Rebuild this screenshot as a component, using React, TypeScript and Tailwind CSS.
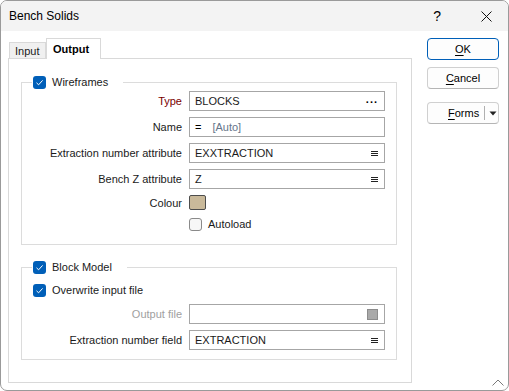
import React from "react";

const font = { fontFamily: '"Liberation Sans", Arial, sans-serif' };

function Check({ on }: { on: boolean }) {
  if (!on) {
    return <span className="block w-[13px] h-[13px] rounded-[3px] border border-[#8a8a8a] bg-[#f7f7f7]" />;
  }
  return (
    <span className="flex w-[13px] h-[13px] rounded-[3px] bg-[#005fb8] items-center justify-center">
      <svg width="9" height="9" viewBox="0 0 9 9" fill="none">
        <path d="M1.5 4.8 L3.6 6.8 L7.6 2.4" stroke="white" strokeWidth="1" />
      </svg>
    </span>
  );
}

function ListIcon() {
  return (
    <svg width="7" height="7" viewBox="0 0 7 7" className="shrink-0">
      <path d="M0 1.5H7M0 3.5H7M0 5.5H7" stroke="#222" strokeWidth="1" />
    </svg>
  );
}

function Field({ children, right }: { children?: React.ReactNode; right?: React.ReactNode }) {
  return (
    <div className="flex items-center h-[20px] w-[196px] border border-[#a6a6a6] bg-white pl-[5px] pr-[6px]">
      <div className="flex-1 flex items-center whitespace-nowrap">{children}</div>
      {right}
    </div>
  );
}

function Label({ children, className = "" }: { children: React.ReactNode; className?: string }) {
  return <div className={"text-right whitespace-nowrap " + className}>{children}</div>;
}

export default function App() {
  return (
    <div className="w-[509px] h-[391px] bg-white text-[11px] leading-[14px] text-[#1a1a1a]" style={font}>
      <div className="relative w-full h-full flex flex-col border border-[#9a9a9a] rounded-[7px] overflow-hidden">
        {/* title bar */}
        <div className="h-[30px] shrink-0 bg-[#f3f3f3] flex items-center pl-[8px]">
          <span className="text-[12px] text-black">Bench Solids</span>
          <span className="ml-auto text-[14px] text-black mr-[40px]">?</span>
          <svg width="11" height="11" viewBox="0 0 11 11" className="mr-[16px]">
            <path d="M0.5 0.5L10.5 10.5M10.5 0.5L0.5 10.5" stroke="#111" strokeWidth="1" />
          </svg>
        </div>

        <div className="flex-1 flex pl-[7px] pt-[7px] pb-[7px]">
          {/* tab control */}
          <div className="w-[404px] flex flex-col">
            <div className="flex items-end h-[20px] pl-[1px]">
              <div className="h-[16px] w-[37px] bg-[#f0f0f0] border border-b-0 border-[#d9d9d9] flex items-center pl-[5px]">
                Input
              </div>
              <div className="relative z-10 -mb-px h-[21px] w-[55px] bg-white border border-b-0 border-[#d9d9d9] flex items-center pl-[6px] pb-[1px] font-bold text-black">
                Output
              </div>
            </div>
            <div className="flex-1 border border-[#d9d9d9] bg-white pl-[12px] pt-[16px]">
              {/* Wireframes group */}
              <fieldset className="w-[376px] border border-[#dcdcdc] pb-[13px]">
                <legend className="ml-[10px] pl-[1px] pr-[15px]">
                  <span className="flex items-center h-[14px] gap-[6px]">
                    <Check on />
                    <span>Wireframes</span>
                  </span>
                </legend>
                <div className="grid grid-cols-[160px_196px] gap-x-[7px] gap-y-[6px] items-center mt-[2px]">
                  <Label className="text-[#7a0000]">Type</Label>
                  <Field right={<span className="font-bold tracking-[1px] text-black leading-none pb-[3px]">...</span>}>BLOCKS</Field>
                  <Label>Name</Label>
                  <Field>
                    <span className="text-black">=</span>
                    <span className="ml-[11px] text-[#65758a]">[Auto]</span>
                  </Field>
                  <Label>Extraction number attribute</Label>
                  <Field right={<ListIcon />}>EXXTRACTION</Field>
                  <Label>Bench Z attribute</Label>
                  <Field right={<ListIcon />}>Z</Field>
                  <Label>Colour</Label>
                  <span className="block w-[17px] h-[15px] rounded-[2px] border border-[#4d4d4d] bg-[#c9b99a]" />
                  <span />
                  <div className="flex items-center gap-[6px] mt-[1px]">
                    <Check on={false} />
                    <span>Autoload</span>
                  </div>
                </div>
              </fieldset>

              {/* Block Model group */}
              <fieldset className="w-[376px] border border-[#dcdcdc] mt-[15px] pb-[9px]">
                <legend className="ml-[10px] pl-[1px] pr-[15px]">
                  <span className="flex items-center h-[14px] gap-[6px]">
                    <Check on />
                    <span>Block Model</span>
                  </span>
                </legend>
                <div className="flex items-center gap-[6px] ml-[11px] mt-[9px]">
                  <Check on />
                  <span>Overwrite input file</span>
                </div>
                <div className="grid grid-cols-[160px_196px] gap-x-[7px] gap-y-[6px] items-center mt-[7px]">
                  <Label className="text-[#a0a0a0]">Output file</Label>
                  <Field right={<span className="block w-[11px] h-[11px] bg-[#a9a9a9] border border-[#8c8c8c]" />} />
                  <Label>Extraction number field</Label>
                  <Field right={<ListIcon />}>EXTRACTION</Field>
                </div>
              </fieldset>
            </div>
          </div>

          {/* buttons */}
          <div className="ml-[15px] w-[72px] flex flex-col">
            <button className="h-[22px] rounded-[4px] border border-[#005fb8] bg-[#fdfdfd] text-black">
              <span className="underline underline-offset-2">O</span>K
            </button>
            <button className="mt-[7px] h-[22px] rounded-[4px] border border-[#d0d0d0] border-b-[#b5b5b5] bg-[#fdfdfd] text-black">
              <span className="underline underline-offset-2">C</span>ancel
            </button>
            <button className="mt-[13px] h-[22px] rounded-[4px] border border-[#d0d0d0] border-b-[#b5b5b5] bg-[#fdfdfd] text-black flex items-center">
              <span className="ml-[20px]">
                <span className="underline underline-offset-2">F</span>orms
              </span>
              <span className="ml-[5px] w-px h-[14px] bg-[#b0b0b0]" />
              <svg width="8" height="5" viewBox="0 0 8 5" className="ml-[4px]">
                <path d="M0.5 0.5H7.5L4 4.5Z" fill="#222" />
              </svg>
            </button>
          </div>
        </div>

        {/* resize grip */}
        <svg width="12" height="7" viewBox="0 0 12 7" className="absolute right-[4px] bottom-[4px]">
          <path d="M0.5 6.5L6 1L11.5 6.5" stroke="#7a7a7a" strokeWidth="1" fill="none" />
        </svg>
      </div>
    </div>
  );
}
